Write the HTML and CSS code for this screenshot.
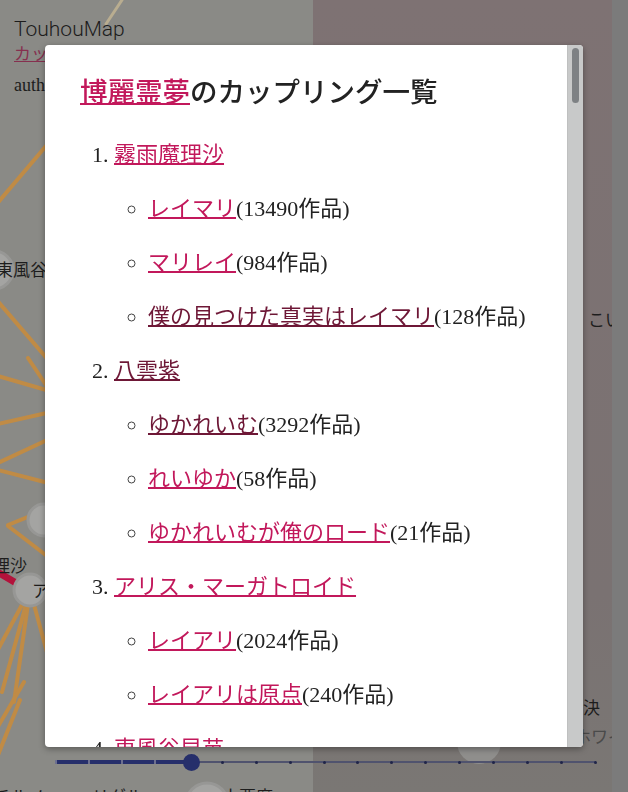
FILE: index.html
```html
<!DOCTYPE html>
<html lang="ja">
<head>
<meta charset="utf-8">
<title>TouhouMap</title>
<link rel="stylesheet" href="styles.css">
</head>
<body>
<div class="app">
  <main class="stage">
    <svg class="map-canvas" viewBox="0 0 612 792" preserveAspectRatio="xMinYMin slice">
      <defs>
        <linearGradient id="tintFade" x1="0" y1="0" x2="0" y2="1">
          <stop offset="0" stop-color="#7e7273"/>
          <stop offset="0.75" stop-color="#7a7272"/>
          <stop offset="1" stop-color="#7a7774"/>
        </linearGradient>
      </defs>
      <rect x="313" y="0" width="299" height="792" fill="url(#tintFade)"/>
      <line class="edge pale" x1="122" y1="0" x2="106" y2="24"/>
      <line class="edge" x1="46" y1="146" x2="-5" y2="206"/>
      <line class="edge" x1="-5" y1="298" x2="50" y2="362"/>
      <line class="edge" x1="-2" y1="376" x2="60" y2="394"/>
      <line class="edge" x1="28" y1="358" x2="60" y2="406"/>
      <line class="edge" x1="-2" y1="424" x2="60" y2="410"/>
      <line class="edge" x1="-2" y1="463" x2="60" y2="434"/>
      <line class="edge" x1="-2" y1="470" x2="60" y2="486"/>
      <line class="edge" x1="8" y1="525" x2="60" y2="504"/>
      <line class="edge" x1="8" y1="526" x2="60" y2="566"/>
      <line class="edge" x1="30" y1="590" x2="-5" y2="655"/>
      <line class="edge" x1="30" y1="590" x2="2" y2="692"/>
      <line class="edge" x1="30" y1="590" x2="14" y2="702"/>
      <line class="edge" x1="30" y1="590" x2="60" y2="700"/>
      <line class="edge" x1="24" y1="682" x2="-4" y2="730"/>
      <line class="edge" x1="20" y1="700" x2="-4" y2="760"/>
      <line class="edge red" x1="-6" y1="570" x2="28" y2="590"/>
      <circle class="node" cx="-6" cy="270" r="19"/>
      <circle class="node" cx="44" cy="520" r="16"/>
      <circle class="node" cx="30" cy="590" r="16"/>
      <circle class="node" cx="207" cy="804" r="21"/>
      <circle class="node faint" cx="479" cy="742" r="22"/>
      <text class="label" x="-4" y="276">東風谷早苗</text>
      <text class="label" x="27" y="572" text-anchor="end">霧雨魔理沙</text>
      <text class="label" x="32" y="597">アリス</text>
      <text class="label" x="588" y="326">こいし</text>
      <text class="label" x="600" y="714" text-anchor="end">未解決</text>
      <text class="label dim" x="523" y="743">リリーホワイト</text>
      <text class="label" x="-6" y="803">チルノ</text>
      <text class="label" x="92" y="803">リグル</text>
      <text class="label" x="222" y="803">小悪魔</text>
    </svg>
    <header class="site-head">
      <div class="site-title">TouhouMap</div>
      <a class="site-link" href="#">カップリング一覧を見る</a>
      <div class="site-author">author: touhoumap</div>
    </header>
    <div class="timeline">
      <div class="track">
        <div class="track-line"></div>
        <div class="track-fill" style="width:25%"></div>
        <div class="ticks">
          <span class="tick on"></span><span class="tick on"></span><span class="tick on"></span><span class="tick on"></span><span class="tick"></span><span class="tick"></span><span class="tick"></span><span class="tick"></span><span class="tick"></span><span class="tick"></span><span class="tick"></span><span class="tick"></span><span class="tick"></span><span class="tick"></span><span class="tick"></span><span class="tick"></span><span class="tick"></span>
        </div>
        <div class="thumb" style="left:25%"></div>
      </div>
    </div>
  </main>
  <div class="page-scroll"></div>
</div>

<div class="overlay">
  <div class="modal">
    <div class="modal-body">
      <h2 class="modal-title"><a class="link" href="#">博麗霊夢</a>のカップリング一覧</h2>
      <ol class="pair-list">
        <li><a class="link" href="#">霧雨魔理沙</a>
          <ul class="pair-sub">
            <li><a class="link" href="#">レイマリ</a>(13490作品)</li>
            <li><a class="link" href="#">マリレイ</a>(984作品)</li>
            <li><a class="link visited" href="#">僕の見つけた真実はレイマリ</a>(128作品)</li>
          </ul>
        </li>
        <li><a class="link visited" href="#">八雲紫</a>
          <ul class="pair-sub">
            <li><a class="link visited" href="#">ゆかれいむ</a>(3292作品)</li>
            <li><a class="link" href="#">れいゆか</a>(58作品)</li>
            <li><a class="link" href="#">ゆかれいむが俺のロード</a>(21作品)</li>
          </ul>
        </li>
        <li><a class="link" href="#">アリス・マーガトロイド</a>
          <ul class="pair-sub">
            <li><a class="link" href="#">レイアリ</a>(2024作品)</li>
            <li><a class="link" href="#">レイアリは原点</a>(240作品)</li>
          </ul>
        </li>
        <li><a class="link" href="#">東風谷早苗</a>
          <ul class="pair-sub">
            <li><a class="link" href="#">レイサナ</a>(1108作品)</li>
            <li><a class="link" href="#">サナレイ</a>(96作品)</li>
          </ul>
        </li>
        <li><a class="link" href="#">伊吹萃香</a>
          <ul class="pair-sub">
            <li><a class="link" href="#">すいれいむ</a>(512作品)</li>
          </ul>
        </li>
      </ol>
    </div>
    <div class="modal-scroll"><div class="modal-thumb"></div></div>
  </div>
</div>
</body>
</html>
```

FILE: styles.css
```css
html, body {
  margin: 0;
  padding: 0;
  height: 100%;
}

body {
  background: #8a8a86;
  font-family: "Noto Sans CJK JP", sans-serif;
  overflow: hidden;
}

.app {
  display: flex;
  height: 100vh;
}

.stage {
  position: relative;
  flex: 1;
  display: flex;
  flex-direction: column;
  justify-content: space-between;
  overflow: hidden;
}

.page-scroll {
  width: 16px;
  background: #7b7b7b;
}

.map-canvas {
  position: absolute;
  inset: 0;
  width: 100%;
  height: 100%;
}

.edge {
  stroke: #c08b45;
  stroke-width: 4;
  stroke-linecap: round;
}

.edge.pale {
  stroke: #b9ad90;
  stroke-width: 3;
}

.edge.red {
  stroke: #b3123b;
  stroke-width: 7;
}

.node {
  fill: #a4a4a2;
  stroke: #979795;
  stroke-width: 3;
}

.node.faint {
  fill: #8f8e8c;
  stroke: none;
}

.label {
  font-family: "Noto Sans CJK JP", sans-serif;
  font-size: 17px;
  fill: #1d1d1d;
}

.label.dim {
  fill: #4a4a4a;
}

.site-head {
  position: relative;
  padding: 17px 14px 0;
}

.site-title {
  font-family: Roboto, "Noto Sans CJK JP", sans-serif;
  font-weight: 300;
  font-size: 21px;
  line-height: 24px;
  color: #1c1c1c;
}

.site-link {
  display: inline-block;
  font-family: "Liberation Serif", "Noto Sans CJK JP", serif;
  font-size: 17px;
  line-height: 28px;
  color: #86304f;
}

.site-author {
  font-family: "Liberation Serif", serif;
  font-size: 18px;
  line-height: 32px;
  color: #1c1c1c;
}

.timeline {
  position: relative;
  padding: 0 16px 0 56px;
  margin-bottom: 20px;
}

.track {
  position: relative;
  height: 20px;
  display: flex;
  align-items: center;
}

.track-line {
  position: absolute;
  left: 0;
  right: 0;
  height: 2px;
  background: #50536e;
}

.track-fill {
  position: absolute;
  left: 0;
  height: 4px;
  background: #262f6b;
}

.ticks {
  position: relative;
  flex: 1;
  display: flex;
  justify-content: space-between;
  align-items: center;
  margin: 0 -1px;
}

.tick {
  width: 3px;
  height: 3px;
  border-radius: 50%;
  background: #1f2448;
}

.tick.on {
  width: 2px;
  height: 4px;
  border-radius: 0;
  background: #6d7090;
}

.thumb {
  position: absolute;
  top: 2px;
  width: 17px;
  height: 17px;
  margin-left: -8px;
  border-radius: 50%;
  background: #262f6b;
}

.overlay {
  position: fixed;
  inset: 0;
  display: flex;
  align-items: center;
  justify-content: center;
}

.modal {
  width: 538px;
  height: 702px;
  background: #ffffff;
  border-radius: 4px;
  display: flex;
  overflow: hidden;
  box-shadow: 0 2px 6px rgba(0, 0, 0, 0.35);
}

.modal-body {
  flex: 1;
  overflow: hidden;
  padding: 25px 35px 0;
}

.modal-scroll {
  width: 16px;
  box-sizing: border-box;
  padding: 3px 4px;
  background: #c8c9c9;
  border-left: 1px solid #bfc0c0;
}

.modal-thumb {
  height: 55px;
  border-radius: 4px;
  background: #7e8184;
}

.modal-title {
  margin: 0;
  font-family: "Noto Sans CJK JP", sans-serif;
  font-weight: 500;
  font-size: 27.5px;
  line-height: 40px;
  color: #222222;
}

.link {
  color: #c2185b;
  text-decoration: underline;
  text-decoration-thickness: 1.5px;
}

.link.visited {
  color: #6e1736;
}

.pair-list {
  margin: 18px 0 0;
  padding-left: 34px;
  font-family: "Liberation Serif", "Noto Sans CJK JP", serif;
  font-size: 22px;
  line-height: 54px;
  color: #222222;
}

.pair-sub {
  margin: 0;
  padding-left: 34px;
  list-style-type: circle;
}

.pair-sub > li::marker {
  color: #444444;
}
```
